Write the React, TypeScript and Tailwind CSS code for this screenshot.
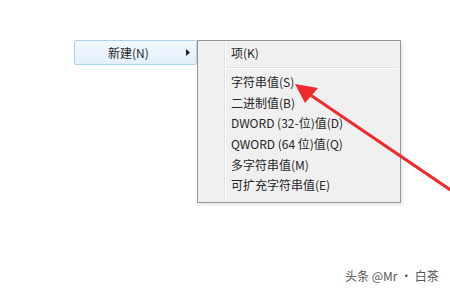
const items = [
  '字符串值(S)',
  '二进制值(B)',
  'DWORD (32-位)值(D)',
  'QWORD (64 位)值(Q)',
  '多字符串值(M)',
  '可扩充字符串值(E)',
];

function MenuRow({ label }: { label: string }) {
  return (
    <div className="h-[20.6px] flex items-center pl-[33px] text-[12px] text-[#262626] leading-none">
      {label}
    </div>
  );
}

export default function App() {
  return (
    <div
      className="relative w-[450px] h-[300px] bg-white overflow-hidden"
      style={{ fontFamily: '"Microsoft YaHei", "Noto Sans CJK SC", "Noto Sans", sans-serif' }}
    >
      <div className="flex items-start pt-[40px] pl-[74px]">
        {/* parent menu, only the hovered item is visible */}
        <div className="w-[123px] h-[25px] border border-[#a9d4f0] rounded-[2px] bg-gradient-to-b from-[#f2f8fd] to-[#e3f0fb] flex items-center text-[12px] text-[#262626]">
          <span className="pl-[33px] flex-1">新建(N)</span>
          <svg width="4" height="7" viewBox="0 0 4 7" className="mr-[6px]">
            <path d="M0 0 L4 3.5 L0 7 Z" fill="#222" />
          </svg>
        </div>

        {/* sub menu */}
        <div className="relative w-[204px] h-[163px] bg-[#f0f0f0] border border-[#979797] shadow-[2px_2px_3px_rgba(0,0,0,0.1)] py-[2px]">
          <div className="absolute top-[2px] bottom-[2px] left-[26px] w-[2px] border-l border-[#e2e3e3] border-r border-r-white" />
          <div className="h-[20px] flex items-center pl-[33px] text-[12px] text-[#262626] leading-none">项(K)</div>
          <div className="h-[9px] flex items-center pl-[28px] pr-[2px]">
            <div className="w-full h-[2px] border-t border-[#e0e0e0] border-b border-b-white" />
          </div>
          {items.map((it) => (
            <MenuRow key={it} label={it} />
          ))}
        </div>
      </div>

      {/* red arrow annotation */}
      <svg className="absolute inset-0" width="450" height="300" viewBox="0 0 450 300">
        <line x1="306" y1="92" x2="452" y2="191" stroke="#ee2a2a" strokeWidth="3" strokeLinecap="round" />
        <path d="M295 84 L318 88 L305 103 Z" fill="#ee2a2a" />
      </svg>

      <div className="absolute left-[345px] top-[267px] text-[12px] text-[#555]">头条 @Mr · 白茶</div>
    </div>
  );
}
